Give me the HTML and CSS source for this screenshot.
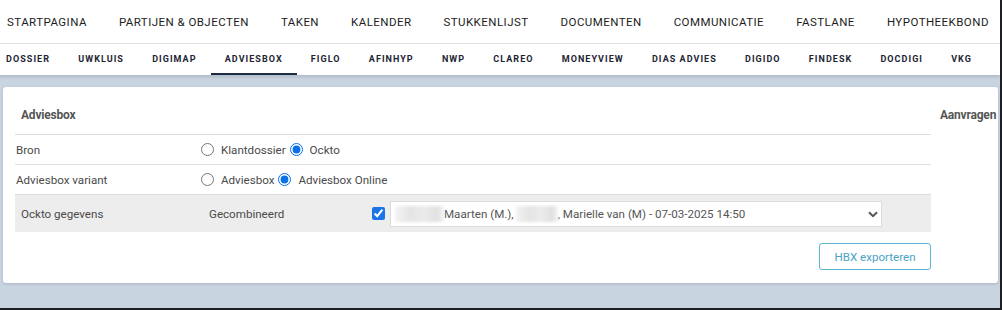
FILE: index.html
```html
<!DOCTYPE html>
<html lang="nl">
<head>
<meta charset="utf-8">
<title>Adviesbox</title>
<link rel="stylesheet" href="styles.css">
</head>
<body>
<div class="frame">
  <nav class="topnav">
    <a>STARTPAGINA</a>
    <a>PARTIJEN &amp; OBJECTEN</a>
    <a>TAKEN</a>
    <a>KALENDER</a>
    <a>STUKKENLIJST</a>
    <a>DOCUMENTEN</a>
    <a>COMMUNICATIE</a>
    <a>FASTLANE</a>
    <a>HYPOTHEEKBOND</a>
  </nav>
  <nav class="subnav">
    <a>DOSSIER</a>
    <a>UWKLUIS</a>
    <a>DIGIMAP</a>
    <a class="active">ADVIESBOX</a>
    <a>FIGLO</a>
    <a>AFINHYP</a>
    <a>NWP</a>
    <a>CLAREO</a>
    <a>MONEYVIEW</a>
    <a>DIAS ADVIES</a>
    <a>DIGIDO</a>
    <a>FINDESK</a>
    <a>DOCDIGI</a>
    <a>VKG</a>
  </nav>
  <main class="content">
    <section class="card">
      <div class="main">
        <h2 class="title">Adviesbox</h2>
        <div class="row">
          <div class="label">Bron</div>
          <div class="options">
            <label class="opt"><input type="radio" name="bron"><span>Klantdossier</span></label>
            <label class="opt"><input type="radio" name="bron" checked><span>Ockto</span></label>
          </div>
        </div>
        <div class="row">
          <div class="label">Adviesbox variant</div>
          <div class="options">
            <label class="opt"><input type="radio" name="var"><span>Adviesbox</span></label>
            <label class="opt"><input type="radio" name="var" checked><span>Adviesbox Online</span></label>
          </div>
        </div>
        <div class="row grey">
          <div class="label">Ockto gegevens</div>
          <div class="mode">Gecombineerd</div>
          <input class="check" type="checkbox" checked>
          <div class="select">
            <span class="blur b1"></span><span class="txt">Maarten (M.),</span><span class="blur b2"></span><span class="txt">, Marielle van (M) - 07-03-2025 14:50</span>
            <svg class="chev" width="10" height="7" viewBox="0 0 10 7"><path d="M1 1.2 L5 5.2 L9 1.2" fill="none" stroke="#555" stroke-width="2"/></svg>
          </div>
        </div>
        <div class="actions">
          <button class="btn">HBX exporteren</button>
        </div>
      </div>
      <aside class="side">
        <h2 class="title">Aanvragen</h2>
      </aside>
    </section>
  </main>
</div>
</body>
</html>
```
FILE: styles.css
```css
* { box-sizing: border-box; }
html, body { margin: 0; padding: 0; }
body {
  width: 1002px;
  height: 310px;
  overflow: hidden;
  font-family: Roboto, "Liberation Sans", Arial, sans-serif;
  background: #1e1f22;
}
.frame {
  width: 1000px;
  height: 308px;
  background: #c9d4e1;
  display: flex;
  flex-direction: column;
  overflow: hidden;
}
.topnav {
  height: 44px;
  background: #fff;
  border-bottom: 1px solid #e4e4e4;
  display: flex;
  align-items: center;
  gap: 32px;
  padding-left: 7px;
  white-space: nowrap;
}
.topnav a {
  font-size: 11.5px;
  letter-spacing: 0.45px;
  color: #1d1d1d;
  padding-top: 1px;
}
.subnav {
  height: 31px;
  background: #fff;
  display: flex;
  align-items: stretch;
  margin-left: -8px;
  padding-left: 0;
  white-space: nowrap;
  box-shadow: 0 2px 3px rgba(0,0,0,0.12);
  position: relative;
  z-index: 1;
}
.subnav a {
  font-size: 9px;
  font-weight: 700;
  letter-spacing: 1.05px;
  color: #1d2433;
  padding: 0 14.1px;
  display: flex;
  align-items: center;
  border-bottom: 2px solid transparent;
}
.subnav a.active { border-bottom-color: #1c2c45; }
.content {
  flex: 1;
  padding: 12px 2px 0 3px;
}
.card {
  background: #fff;
  border-radius: 3px;
  box-shadow: 0 1px 3px rgba(0,0,0,0.15);
  display: flex;
  gap: 9px;
  padding: 0 0 13px 12px;
}
.main { width: 916px; }
.side { flex: 1; }
.title {
  margin: 0;
  font-size: 12px;
  font-weight: 700;
  color: #555;
  height: 47px;
  padding-top: 21px;
  padding-left: 6px;
  letter-spacing: -0.2px;
}
.side .title { padding-left: 0; }
.row {
  display: flex;
  align-items: center;
  height: 30px;
  border-top: 1px solid #dedede;
  font-size: 11.6px;
  color: #4a4a4a;
}
.row .label { width: 185px; padding-left: 1px; }
.options { display: flex; align-items: center; gap: 3px; }
.opt { display: flex; align-items: center; gap: 7px; }
.opt input {
  margin: 0 0 0 1px;
  width: 13px;
  height: 13px;
  accent-color: #0b6fe8;
}
.row.grey {
  height: 38px;
  background: #ededed;
}
.row.grey .label { width: 194px; padding-left: 6px; }
.mode { width: 163px; }
.check {
  margin: 0 5px 0 0;
  width: 13px;
  height: 13px;
  accent-color: #1a73e8;
}
.select {
  width: 492px;
  height: 26px;
  background: #fff;
  border: 1px solid #dcdcdc;
  display: flex;
  align-items: center;
  padding-left: 4px;
  position: relative;
  color: #555;
  white-space: nowrap;
}
.blur {
  display: inline-block;
  height: 16px;
  background: linear-gradient(90deg, #f3f3f3 0%, #e4e4e4 30%, #ebebeb 60%, #e0e0e0 85%, #f2f2f2 100%);
  filter: blur(1.5px);
}
.b1 { width: 49px; }
.b2 { width: 42px; margin-left: 2px; }
.chev { position: absolute; right: 3px; top: 9px; }
.actions {
  display: flex;
  justify-content: flex-end;
  margin-top: 11px;
}
.btn {
  font-family: inherit;
  font-size: 11.6px;
  color: #4aa3c6;
  background: #fff;
  border: 1px solid #5ab6d2;
  border-radius: 3px;
  height: 27px;
  width: 112px;
  padding: 0;
}
```
